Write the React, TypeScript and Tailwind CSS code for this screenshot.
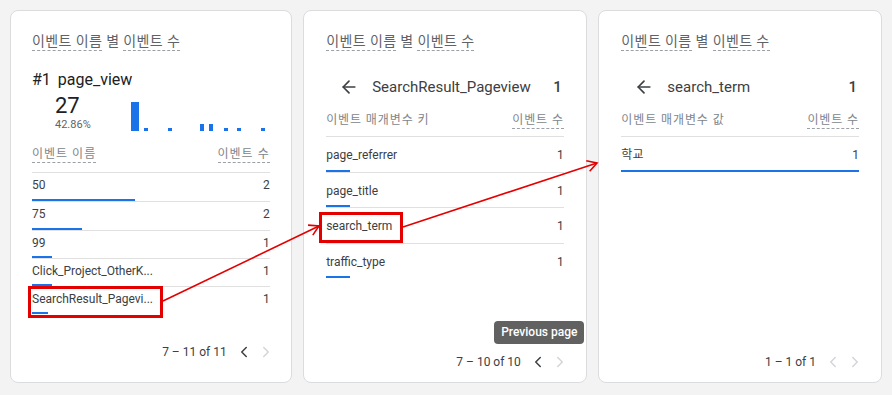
import { ArrowLeft, ChevronLeft, ChevronRight } from 'lucide-react';

const font = { fontFamily: 'Roboto, "Noto Sans CJK KR", sans-serif' };

function Dashed({ children }: { children: React.ReactNode }) {
  return <span className="inline-block border-b border-dashed border-[#9aa0a6]">{children}</span>;
}

function CardTitle() {
  return (
    <div className="pt-[21px] text-[14px] leading-[18px] tracking-[0.4px] text-[#5f6368]">
      <Dashed>이벤트 이름</Dashed> 별 <Dashed>이벤트 수</Dashed>
    </div>
  );
}

function Pager({ label, prevOn }: { label: string; prevOn: boolean }) {
  return (
    <div className="-mr-[5px] flex items-center justify-end text-[12px] leading-[16px] text-[#3c4043]">
      <span>{label}</span>
      <ChevronLeft size={18} strokeWidth={2} className={`ml-[8px] ${prevOn ? 'text-[#3c4043]' : 'text-[#d3d5d8]'}`} />
      <ChevronRight size={18} strokeWidth={2} className="ml-[4px] text-[#d3d5d8]" />
    </div>
  );
}

function MiniChart() {
  const bars = [
    { x: 0, w: 8, h: 29 },
    { x: 13, w: 4, h: 3 },
    { x: 37, w: 4, h: 3 },
    { x: 69, w: 4, h: 7 },
    { x: 78, w: 4, h: 7 },
    { x: 93, w: 4, h: 3 },
    { x: 106, w: 4, h: 3 },
    { x: 130, w: 4, h: 3 },
  ];
  return (
    <svg width="136" height="30" className="block">
      {bars.map((b, i) => (
        <rect key={i} x={b.x} y={30 - b.h} width={b.w} height={b.h} fill="#1a73e8" />
      ))}
    </svg>
  );
}

const events = [
  { name: '50', count: 2, bar: 103 },
  { name: '75', count: 2, bar: 50 },
  { name: '99', count: 1, bar: 20 },
  { name: 'Click_Project_OtherK...', count: 1, bar: 20 },
  { name: 'SearchResult_Pagevi...', count: 1, bar: 16 },
];

const params = ['page_referrer', 'page_title', 'search_term', 'traffic_type'];

function EventsCard() {
  return (
    <div className="flex flex-1 flex-col rounded-lg border border-[#dadce0] bg-white px-[21px]">
      <CardTitle />
      <div className="mt-[19px] flex gap-[7px] text-[16px] leading-[20px] text-[#202124]">
        <span>#1</span>
        <span>page_view</span>
      </div>
      <div className="mt-[4px] flex items-end">
        <div className="w-[99px] pl-[23px]">
          <div className="text-[22px] leading-[24px] text-[#202124]">27</div>
          <div className="text-[11px] leading-[13px] text-[#5f6368]">42.86%</div>
        </div>
        <MiniChart />
      </div>
      <div className="mt-[15px] flex justify-between border-b border-[#e0e0e0] pb-[9px] text-[12px] leading-[16px] tracking-[1px] text-[#80868b]">
        <Dashed>이벤트 이름</Dashed>
        <Dashed>이벤트 수</Dashed>
      </div>
      {events.map((e, i) => (
        <div
          key={e.name}
          className={`pt-[4px] text-[12px] leading-[16px] text-[#3c4043] ${i < events.length - 1 ? 'border-b border-[#e0e0e0]' : ''}`}
        >
          <div className="flex justify-between">
            <span>{e.name}</span>
            <span>{e.count}</span>
          </div>
          <div className={`h-[2px] bg-[#1a73e8] ${i < 2 ? 'mt-[6px]' : 'mt-[5px]'}`} style={{ width: e.bar }} />
        </div>
      ))}
      <div className="mt-auto pb-[21px]">
        <Pager label="7 – 11 of 11" prevOn />
      </div>
    </div>
  );
}

function DrillCard({
  title,
  header,
  rows,
  barFull,
  pager,
  prevOn,
  children,
}: {
  title: string;
  header: string;
  rows: string[];
  barFull?: boolean;
  pager: string;
  prevOn: boolean;
  children?: React.ReactNode;
}) {
  return (
    <div className="relative flex flex-1 flex-col rounded-lg border border-[#dadce0] bg-white px-[22px]">
      <CardTitle />
      <div className="mt-[26px] flex items-center text-[15px] leading-[20px] text-[#3c4043]">
        <ArrowLeft size={20} strokeWidth={2} className="ml-[13px] text-[#3c4043]" />
        <span className="ml-[13px] flex-1">{title}</span>
        <span className="pr-[2px] font-medium">1</span>
      </div>
      <div className="mt-[15px] flex justify-between border-b border-[#e0e0e0] pb-[7px] text-[12px] leading-[16px] tracking-[0.9px] text-[#80868b]">
        <span>{header}</span>
        <Dashed>이벤트 수</Dashed>
      </div>
      {rows.map((r, i) => (
        <div
          key={r}
          className={`pt-[10px] text-[12px] leading-[16px] text-[#3c4043] ${i < rows.length - 1 ? 'border-b border-[#e0e0e0]' : ''}`}
        >
          <div className="flex justify-between">
            <span>{r}</span>
            <span>1</span>
          </div>
          <div className={`mt-[6.5px] h-[2px] bg-[#1a73e8] ${barFull ? 'w-full' : 'w-[24px]'}`} />
        </div>
      ))}
      <div className="mt-auto pb-[11px]">
        <Pager label={pager} prevOn={prevOn} />
      </div>
      {children}
    </div>
  );
}

function arrowHead(x1: number, y1: number, x2: number, y2: number) {
  const a = Math.atan2(y2 - y1, x2 - x1);
  const len = 11;
  const s = Math.PI / 6;
  const p1 = [x2 - len * Math.cos(a - s), y2 - len * Math.sin(a - s)];
  const p2 = [x2 - len * Math.cos(a + s), y2 - len * Math.sin(a + s)];
  return `M${p1[0]},${p1[1]} L${x2},${y2} L${p2[0]},${p2[1]}`;
}

export default function App() {
  return (
    <div className="relative h-[395px] w-[892px] overflow-hidden bg-[#f3f3f4]" style={font}>
      <div className="flex h-full gap-[11.5px] px-[10px] pb-[12px] pt-[10px]">
        <EventsCard />
        <DrillCard
          title="SearchResult_Pageview"
          header="이벤트 매개변수 키"
          rows={params}
          pager="7 – 10 of 10"
          prevOn
        >
          <div className="absolute left-[190px] top-[310px] rounded-[4px] bg-[#616161] px-[7px] py-[3px] text-[12px] font-medium leading-[17px] text-white">
            Previous page
          </div>
        </DrillCard>
        <DrillCard
          title="search_term"
          header="이벤트 매개변수 값"
          rows={['학교']}
          barFull
          pager="1 – 1 of 1"
          prevOn={false}
        />
      </div>
      <svg width="892" height="395" className="pointer-events-none absolute left-0 top-0">
        <rect x="29.5" y="287.5" width="132" height="29" fill="none" stroke="#e50000" strokeWidth="3" />
        <rect x="320.5" y="213.5" width="81" height="28" fill="none" stroke="#e50000" strokeWidth="3" />
        <line x1="163" y1="301" x2="319" y2="226" stroke="#e50000" strokeWidth="1.6" />
        <path d={arrowHead(163, 301, 319, 226)} fill="none" stroke="#e50000" strokeWidth="1.6" />
        <line x1="403" y1="227" x2="597" y2="163" stroke="#e50000" strokeWidth="1.6" />
        <path d={arrowHead(403, 227, 597, 163)} fill="none" stroke="#e50000" strokeWidth="1.6" />
      </svg>
    </div>
  );
}
